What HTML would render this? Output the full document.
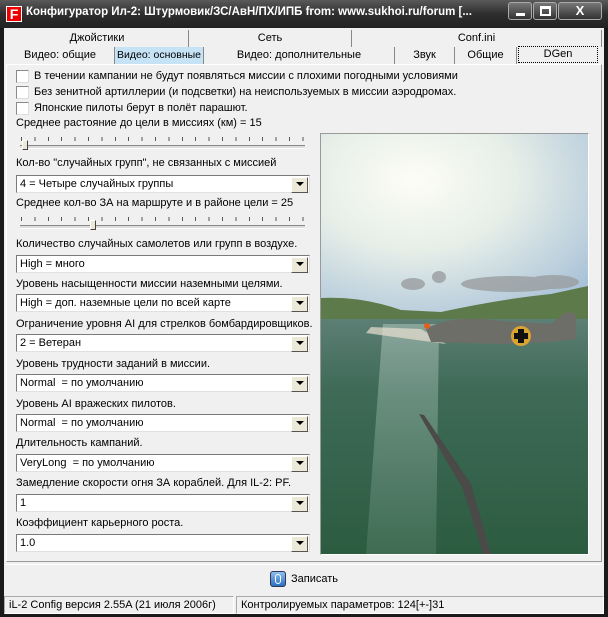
<!DOCTYPE html><html><head><meta charset="utf-8"><style>
*{margin:0;padding:0;box-sizing:border-box}
body{width:608px;height:617px;overflow:hidden;background:#1a1a1a;font-family:"Liberation Sans","DejaVu Sans",sans-serif;font-size:11px;color:#000;position:relative}
.a{position:absolute;white-space:nowrap}
#title{left:0;top:0;width:608px;height:28px;background:linear-gradient(#5a5a5a,#2e2e2e 50%,#222);}
#client{left:4px;top:28px;width:600px;height:586px;background:#f0f0f0}
.tab{position:absolute;height:17px;text-align:center;line-height:16px;border-right:1px solid #888;white-space:nowrap;overflow:hidden}
.cb{width:13px;height:13px;border:1px solid #8a8a8a;background:#fff;border-right-color:#ddd;border-bottom-color:#ddd}
.combo{position:absolute;left:16px;width:294px;height:18px;background:#fff;border:1px solid #7a7a7a;border-right-color:#e0e0e0;border-bottom-color:#e0e0e0;line-height:16px;padding-left:3px;white-space:nowrap}
.combo:after{content:"";position:absolute;right:1px;top:1px;width:15px;height:14px;background:#ece9d8;border:1px solid;border-color:#fff #555 #555 #fff}
.combo b{position:absolute;right:5px;top:6px;width:0;height:0;border-left:4px solid transparent;border-right:4px solid transparent;border-top:4px solid #000;z-index:2}
.lbl{position:absolute;left:16px;white-space:nowrap}
.sl{position:absolute;left:20px;width:285px;height:4px;border-top:1px solid #888;border-bottom:1px solid #fff;background:#ddd}
.ticks{position:absolute;left:21px;width:283px;height:4px;background:repeating-linear-gradient(90deg,#555 0 1px,transparent 1px 13.4px)}
.th{position:absolute;width:6px;height:10px;background:#ece9d8;border:1px solid;border-color:#fff #444 #444 #fff}
</style></head><body>
<div class="a" id="title"></div>
<div class="a" style="left:6px;top:6px;width:16px;height:16px;background:#e00;border:1px solid #fff;color:#fff;font-weight:bold;font-size:14px;line-height:14px;text-align:center">F</div>
<div class="a" style="left:26px;top:6px;color:#fff;font-weight:bold;font-size:11.5px">Конфигуратор Ил-2: Штурмовик/ЗС/АвН/ПХ/ИПБ from: www.sukhoi.ru/forum [...</div>
<div class="a" style="left:508px;top:2px;width:24px;height:18px;border:1px solid #aaa;border-radius:3px;background:linear-gradient(#777,#333)"><div style="position:absolute;left:7px;top:10px;width:9px;height:3px;background:#fff"></div></div>
<div class="a" style="left:533px;top:2px;width:24px;height:18px;border:1px solid #aaa;border-radius:3px;background:linear-gradient(#777,#333)"><div style="position:absolute;left:6px;top:3px;width:11px;height:10px;border:2px solid #fff;border-top-width:3px"></div></div>
<div class="a" style="left:558px;top:2px;width:44px;height:18px;border:1px solid #aaa;border-radius:3px;background:linear-gradient(#777,#333);color:#fff;font-weight:bold;font-size:13px;text-align:center;line-height:16px">X</div>
<div class="a" id="client"></div>
<div class="tab" style="left:6px;top:30px;width:183px">Джойстики</div>
<div class="tab" style="left:189px;top:30px;width:163px">Сеть</div>
<div class="tab" style="left:352px;top:30px;width:250px">Conf.ini</div>
<div class="tab" style="left:6px;top:47px;width:109px">Видео: общие</div>
<div class="tab" style="left:115px;top:47px;width:89px;background:#c6e2f5;font-size:10.5px">Видео: основные</div>
<div class="tab" style="left:204px;top:47px;width:191px">Видео: дополнительные</div>
<div class="tab" style="left:395px;top:47px;width:60px">Звук</div>
<div class="tab" style="left:455px;top:47px;width:62px">Общие</div>
<div class="tab" style="left:518px;top:46px;width:80px;border:1px dotted #000;line-height:15px">DGen</div>
<div class="a" style="left:6px;top:64px;width:596px;height:498px;border:1px solid #999;border-top-color:#fff;border-left-color:#fff"></div>
<div class="a cb" style="left:16px;top:70px"></div><div class="a" style="left:34px;top:70px">В течении кампании не будут появляться миссии с плохими погодными условиями</div>
<div class="a cb" style="left:16px;top:86px"></div><div class="a" style="left:34px;top:86px">Без зенитной артиллерии (и подсветки) на неиспользуемых в миссии аэродромах.</div>
<div class="a cb" style="left:16px;top:102px"></div><div class="a" style="left:34px;top:102px">Японские пилоты берут в полёт парашют.</div>
<div class="lbl" style="top:117px">Среднее растояние до цели в миссиях (км) = 15</div>
<div class="ticks" style="top:137px"></div><div class="sl" style="top:145px"></div><div class="th" style="left:22px;top:140px"></div>
<div class="lbl" style="top:157px">Кол-во "случайных групп", не связанных с миссией</div>
<div class="combo" style="top:175px">4 = Четыре случайных группы<b></b></div>
<div class="lbl" style="top:197px">Среднее кол-во ЗА на маршруте и в районе цели = 25</div>
<div class="ticks" style="top:217px"></div><div class="sl" style="top:225px"></div><div class="th" style="left:90px;top:220px"></div>
<div class="lbl" style="top:238px">Количество случайных самолетов или групп в воздухе.</div>
<div class="combo" style="top:255px">High = много<b></b></div>
<div class="lbl" style="top:278px">Уровень насыщенности миссии наземными целями.</div>
<div class="combo" style="top:294px">High = доп. наземные цели по всей карте<b></b></div>
<div class="lbl" style="top:318px">Ограничение уровня AI для стрелков бомбардировщиков.</div>
<div class="combo" style="top:334px">2 = Ветеран<b></b></div>
<div class="lbl" style="top:358px">Уровень трудности заданий в миссии.</div>
<div class="combo" style="top:374px">Normal&nbsp; = по умолчанию<b></b></div>
<div class="lbl" style="top:398px">Уровень AI вражеских пилотов.</div>
<div class="combo" style="top:414px">Normal&nbsp; = по умолчанию<b></b></div>
<div class="lbl" style="top:437px">Длительность кампаний.</div>
<div class="combo" style="top:454px">VeryLong&nbsp; = по умолчанию<b></b></div>
<div class="lbl" style="top:477px">Замедление скорости огня ЗА кораблей. Для IL-2: PF.</div>
<div class="combo" style="top:494px">1<b></b></div>
<div class="lbl" style="top:517px">Коэффициент карьерного роста.</div>
<div class="combo" style="top:534px">1.0<b></b></div>
<div class="a" style="left:320px;top:133px;width:269px;height:422px;border:1px solid #999;border-right-color:#fff;border-bottom-color:#fff;background:#fff">
<svg width="267" height="420" viewBox="0 0 267 420" style="display:block">
<defs>
<radialGradient id="sky" cx="0.35" cy="0.25" r="0.85"><stop offset="0" stop-color="#fdfdf6"/><stop offset="0.45" stop-color="#e6eee8"/><stop offset="1" stop-color="#a9c2d8"/></radialGradient>
<linearGradient id="sea" x1="0" y1="0" x2="0" y2="1"><stop offset="0" stop-color="#5d7f75"/><stop offset="0.3" stop-color="#3e6a57"/><stop offset="1" stop-color="#2c5c40"/></linearGradient>
<linearGradient id="glint" x1="0" y1="0" x2="0" y2="1"><stop offset="0" stop-color="#c0d4cc" stop-opacity=".45"/><stop offset="1" stop-color="#a8c4b8" stop-opacity=".15"/></linearGradient>
</defs>
<rect width="267" height="185" fill="url(#sky)"/>
<g fill="#9a9ea0" opacity=".8"><ellipse cx="92" cy="150" rx="12" ry="6"/><ellipse cx="118" cy="143" rx="7" ry="6"/><ellipse cx="190" cy="150" rx="50" ry="8"/><ellipse cx="232" cy="148" rx="26" ry="7"/></g>
<path d="M0 164 Q40 162 80 176 L120 178 Q180 165 230 160 L267 152 L267 195 L0 195Z" fill="#5c7a4a"/>
<rect y="185" width="267" height="235" fill="url(#sea)"/>
<path d="M62 190 L118 190 L115 420 L45 420Z" fill="url(#glint)"/>
<path d="M50 193 L100 195 L125 210 L45 199Z" fill="#e8e0d0" opacity=".7"/>
<path d="M105 195 Q130 180 180 187 L230 190 L245 178 L255 180 L255 205 L230 208 L180 210 L110 208Z" fill="#6e6e68"/>
<circle cx="200" cy="202" r="10" fill="#d9a530"/><path d="M197 195h6v14h-6zM193 199h14v6h-14z" fill="#111"/>
<circle cx="106" cy="192" r="3" fill="#e06020"/>
<path d="M98 280 L103 281 L150 350 L170 420 L162 420 L142 355Z" fill="#4a4a48"/>
</svg></div>
<div class="a" style="left:6px;top:564px;width:596px;height:30px;border-top:1px solid #fff"></div>
<div class="a" style="left:270px;top:571px;width:16px;height:16px;border-radius:3px;background:linear-gradient(#8cc0f0,#2a6fc0);border:1px solid #335"><div style="position:absolute;left:4px;top:2px;width:6px;height:10px;border:1.5px solid #fff;border-radius:4px"></div></div>
<div class="a" style="left:291px;top:573px">Записать</div>
<div class="a" style="left:4px;top:596px;width:230px;height:18px;border:1px solid #aaa;border-right-color:#fff;border-bottom-color:#fff;padding:2px 4px">iL-2 Config версия 2.55A (21 июля 2006г)</div>
<div class="a" style="left:236px;top:596px;width:368px;height:18px;border:1px solid #aaa;border-right-color:#fff;border-bottom-color:#fff;padding:2px 4px">Контролируемых параметров: 124[+-]31</div>
</body></html>
